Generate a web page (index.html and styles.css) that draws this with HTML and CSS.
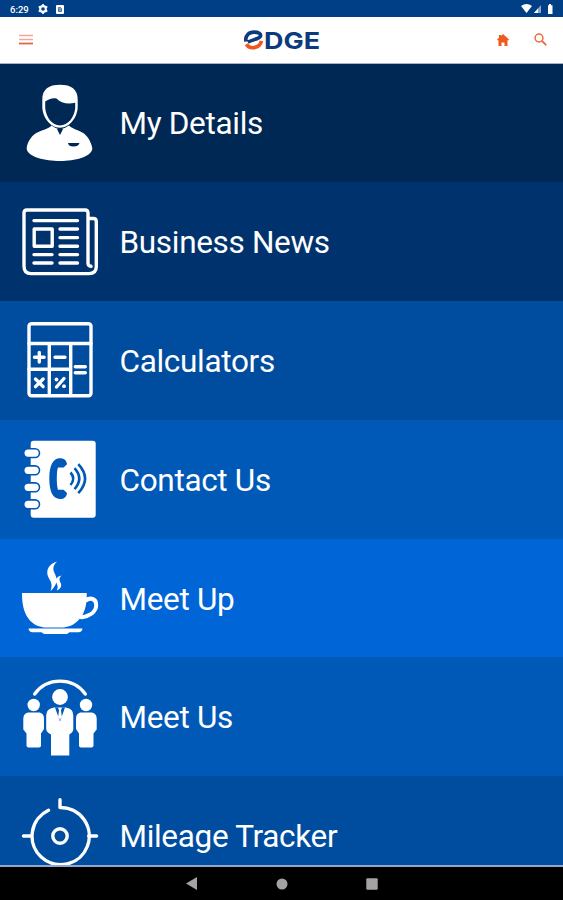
FILE: index.html
```
<!DOCTYPE html>
<html lang="en">
<head>
    <meta charset="UTF-8">
    <meta name="viewport" content="width=device-width, initial-scale=1.0">
    <title>Edge</title>
    <link rel="stylesheet" href="styles.css">
</head>
<body>
    <div class="screen">
        <div class="status-bar">
            <span class="time">6:29</span>
            <svg class="gear" width="10" height="10" viewBox="0 0 10 10"><circle cx="5" cy="5" r="2.9" fill="none" stroke="#fff" stroke-width="2"/><path d="M5 0v10M.7 2.5l8.6 5M.7 7.5l8.6-5" stroke="#fff" stroke-width="1.7"/><circle cx="5" cy="5" r="1.8" fill="#003f85"/></svg>
            <svg class="app" width="8" height="9" viewBox="0 0 8 9"><rect width="8" height="9" rx="1" fill="#fff"/><path d="M2.5 6.5v-4h2l1 1v3z" fill="#7f9fc2" stroke="#4a76a8"/></svg>
            <div class="signals">
                <svg width="33" height="10" viewBox="0 0 33 10"><path d="M0 2q5.500-4 11 0L5.500 9z" fill="#fff"/><path d="M13 9l7-8v8z" fill="#8aa9cf"/><path d="M13 9l4-4.500V9z" fill="#fff"/><path d="M27 1.200h1V0h2v1.200h1.500V10H27z" fill="#fff"/></svg>
            </div>
        </div>

        <div class="header">
            <svg class="menu" width="14" height="12" viewBox="0 0 14 12"><path d="M0 1.500h14M0 5.500h14" stroke="#f2a896" stroke-width="1.500"/><path d="M0 9.500h14" stroke="#e2674a" stroke-width="1.800"/></svg>
            <div class="logo">
                <svg width="20" height="22" viewBox="0 0 21 22"><path d="M2 12.500C1 6 5.500 2.700 10.500 2.700c4.500 0 7.800 1.800 6.700 4.500C16 9.800 9 10.500 4 13.300" fill="none" stroke="#0b3b7c" stroke-width="3.800"/><path d="M2.500 15.500c2 3.300 5 4 8 3.500 4-.5 7-3 7.800-7" fill="none" stroke="#f0561d" stroke-width="3.800"/></svg>
                <svg class="word" width="64" height="32" viewBox="0 0 64 32"><text x="0" y="24.500" textLength="56" lengthAdjust="spacingAndGlyphs">DGE</text></svg>
            </div>
            <svg class="home" width="12" height="12" viewBox="0 0 12 12"><path d="M6 0l6 5.500-.8 1L10.500 6v6h-3V8.500h-3V12h-3V6l-.7.500L0 5.500 2 3.700V1h2v1z" fill="#ee5a1c"/></svg>
            <svg class="search" width="13" height="13" viewBox="0 0 13 13"><circle cx="5" cy="5" r="3.900" fill="none" stroke="#ec6a3c" stroke-width="1.500"/><path d="M8 8l4.200 4.200" stroke="#ec6a3c" stroke-width="1.800"/></svg>
        </div>

        <div class="menu-list">
            <div class="item details">
                <svg viewBox="0 0 80 80">
                    <path fill-rule="evenodd" d="M22.300 17C22 6 29 1.700 40 1.700S58 6 57.700 17v7C57.500 34 50 44.700 40 44.700S22.500 34 22.300 24zM25.200 18.500V25C26 34 32 42.500 40 42.500S54.500 34 55.200 25v-5.200C47 21.500 41 20 36.500 15.500 33 14.500 28.500 16 25.200 18.500z"/>
                    <path d="M31.500 42.500Q36 46 40 46.500 44 46 49 42.500C52 46 60 47.500 64 50.500 69 54.500 72.300 62 72.300 66 71 74 55 78 40 78S8 74 6.700 66C6.700 60 11 53.500 15.500 50.500 20 47.500 29 46 31.500 42.500z"/>
                    <path class="cut" d="M37 46l3 6 3-6zM48 60h11.500q-1 3.600-6 3.600T48 60z"/>
                </svg>
                <span>My Details</span>
            </div>
            <div class="item news">
                <svg viewBox="0 0 80 80">
                    <g class="line">
                        <path d="M68 16.500V11q0-3-3-3H7Q4 8 4 11v53q0 7.600 7 7.600h58q7.300 0 7.300-7V19.500q0-3-3-3H68V61q0 3 3 3.300"/>
                        <path d="M14 18.600h43.500M40 27h17.500M40 35.600h17.500M40 44.200h17.500M40 52.600h17.500M40 61h17.500M14 52.600h18M14 61h18M14.200 27h18v17.300h-18z"/>
                    </g>
                </svg>
                <span>Business News</span>
            </div>
            <div class="item calculators">
                <svg viewBox="0 0 80 80">
                    <g class="line">
                        <rect x="9" y="3.800" width="62" height="72" rx="2.500"/>
                        <path d="M9 23.500h62M29.300 23.500v52M50.700 23.500v52M9 49.300h41.700"/>
                        <path d="M14.500 37.200h9.600M19.300 32.400V42M35 37.200h10M15.500 59l7.600 7.600M23.100 59l-7.600 7.600M36.500 67l7.500-8.500M55.300 46.800h10M55.300 52.800h10"/>
                    </g>
                    <circle cx="36.500" cy="59.500" r="1.900"/><circle cx="44" cy="66.200" r="1.900"/>
                </svg>
                <span>Calculators</span>
            </div>
            <div class="item contact">
                <svg viewBox="0 0 80 80">
                    <rect x="10.700" y="1.700" width="65" height="77" rx="3"/>
                    <g class="ring">
                        <rect x="3.700" y="9.700" width="15.800" height="8.800" rx="4.400"/>
                        <rect x="3.700" y="26.900" width="15.800" height="8.800" rx="4.400"/>
                        <rect x="3.700" y="43.900" width="15.800" height="8.800" rx="4.400"/>
                        <rect x="3.700" y="60.900" width="15.800" height="8.800" rx="4.400"/>
                    </g>
                    <path class="cut" d="M40 19.300c4 0 6.500 2 7 6l-3.400 3.200H38q-1.200 3-1.200 11.100T38 50.700h5.600l3.400 3.200C46.500 58 44 60 40 60c-7 0-10.700-7-10.700-20.400S33 19.300 40 19.300z"/>
                    <path class="wave" d="M50.500 33.500q5.500 6 0 12.500M54.500 29.200q9.500 10.400 0 21M58.300 25.200q13.500 14.400 0 29"/>
                </svg>
                <span>Contact Us</span>
            </div>
            <div class="item meet-up">
                <svg viewBox="0 0 80 80">
                    <path d="M2 34.900h64.700c.5 14-3 27-16.700 33.100l-6 1.500H24l-6-1.500C5 62 2 49 2 34.900zM8.500 70.500h54q-.5 3.800-4 3.800h-9l-2.500 1.700H24l-2.500-1.700h-9q-3.500 0-4-3.800z"/>
                    <path class="line handle" d="M65.500 42.500c5-3.500 10.700-2 10.700 4.500 0 7-7 11-14.500 12.300"/>
                    <path d="M37 3.500c-5 5-4 8.500-1.800 13 2.600 5 1.700 11-4.700 16.500 2-6 1-8.500-1.500-12.500C25 13.500 28 6 37 3.500zM41.500 17.500c-3 3-2 5-.8 7.500 1.500 3.500-.5 6-4 7.500 1.700-3 .8-5-.2-7.500-1.500-3.800.5-6.500 5-7.500z"/>
                </svg>
                <span>Meet Up</span>
            </div>
            <div class="item meet-us">
                <svg viewBox="0 0 80 80">
                    <path class="line" d="M14.700 17C27-.2 53-.2 65.300 17"/>
                    <circle cx="40" cy="20" r="7.900"/>
                    <circle cx="13.700" cy="28" r="6.200"/>
                    <circle cx="66" cy="28" r="6.200"/>
                    <path d="M8 35.400h11.500q4.500 1 4.500 6V52l-3 4.500v11.900q0 2-2 2H8.500q-2 0-2-2V56.500l-3.200-4V41.400q.2-5 4.700-6zM60.500 35.400H72q4.500 1 4.700 6v11.100l-3.200 4v11.900q0 2-2 2H61q-2 0-2-2V56.500L56 52V41.400q0-5 4.500-6z"/>
                    <path d="M34 30.400h12q7.300 1 7.300 8v13.500q0 3-4 5.500v21H31v-21q-4.800-2.500-4.800-5.500V38.400q0-7 7.800-8z"/>
                    <path class="cut" d="M35 30.400l5 14 5-14h-3l-1 3 .8 6L40 43l-1.800-3.600.8-6-1-3z"/>
                </svg>
                <span>Meet Us</span>
            </div>
            <div class="item mileage">
                <svg viewBox="0 0 80 80">
                    <g class="line">
                        <path d="M40 3.800v7.700A28.600 28.600 0 1 1 28.500 14.200M3.500 40h7.900M68.600 40h8M40 68.500v8"/>
                        <circle cx="40" cy="40" r="7.200"/>
                    </g>
                </svg>
                <span>Mileage Tracker</span>
            </div>
        </div>

        <div class="nav-bar">
            <svg width="12" height="13" viewBox="0 0 12 13"><path d="M0 6.500L11 0v13z"/></svg>
            <svg width="12" height="12" viewBox="0 0 12 12"><circle cx="6" cy="6" r="5.500"/></svg>
            <svg width="12" height="12" viewBox="0 0 12 12"><rect x=".3" y=".3" width="11.400" height="11.400" rx="1"/></svg>
        </div>
    </div>
</body>
</html>
```
FILE: styles.css
```
* {
    box-sizing: border-box;
}

body {
    margin: 0;
    font-family: Roboto, sans-serif;
    color: #fff;
}

.screen {
    display: flex;
    flex-direction: column;
    height: 900px;
    overflow: hidden;
}

svg {
    display: block;
    flex: none;
}

.status-bar {
    display: flex;
    align-items: center;
    flex: none;
    height: 17px;
    padding: 1px 9px 0 10px;
    background: #003f85;
}

.time {
    width: 28px;
    font-size: 9.5px;
    font-weight: 500;
}

.app {
    margin-left: 8px;
}

.signals {
    margin-left: auto;
}

.header {
    display: grid;
    grid-template-columns: 244px 1fr 37px 29px;
    align-items: center;
    flex: none;
    height: 46.5px;
    border-bottom: 1px solid #a9b4cb;
    background: #fff;
}

.menu {
    margin-left: 19px;
}

.logo {
    display: flex;
    align-items: center;
    height: 32px;
}

.word {
    fill: #0b3b7c;
    font: 700 23.5px Inter, sans-serif;
}

.menu-list {
    flex: 1;
    min-height: 0;
    overflow: hidden;
}

.item {
    display: flex;
    align-items: center;
    gap: 20px;
    height: 118.8px;
    padding-left: 20px;
    background: var(--bg);
    font-size: 31.5px;
    letter-spacing: -0.32px;
}

.item svg {
    width: 80px;
    height: 80px;
    fill: #fff;
}

.item span {
    padding-top: 2px;
    margin-left: -0.5px;
}

.details { --bg: #002854; }
.news { --bg: #00336d; }
.calculators { --bg: #004c9f; }
.contact { --bg: #0058b7; }
.meet-up { --bg: #0066d8; }
.meet-us { --bg: #0058b7; }
.mileage { --bg: #004c9f; }

.line {
    fill: none;
    stroke: #fff;
    stroke-width: 3.4;
    stroke-linecap: round;
    stroke-linejoin: round;
}

.handle {
    stroke-width: 4;
}

.cut {
    fill: var(--bg);
}

.ring {
    stroke: var(--bg);
    stroke-width: 1.6;
}

.wave {
    fill: none;
    stroke: var(--bg);
    stroke-width: 2.6;
}

.nav-bar {
    display: flex;
    align-items: center;
    justify-content: center;
    gap: 78px;
    flex: none;
    height: 35px;
    border-top: 2px solid #8fa6cf;
    background: #000;
    fill: #a3a3a3;
}
```
